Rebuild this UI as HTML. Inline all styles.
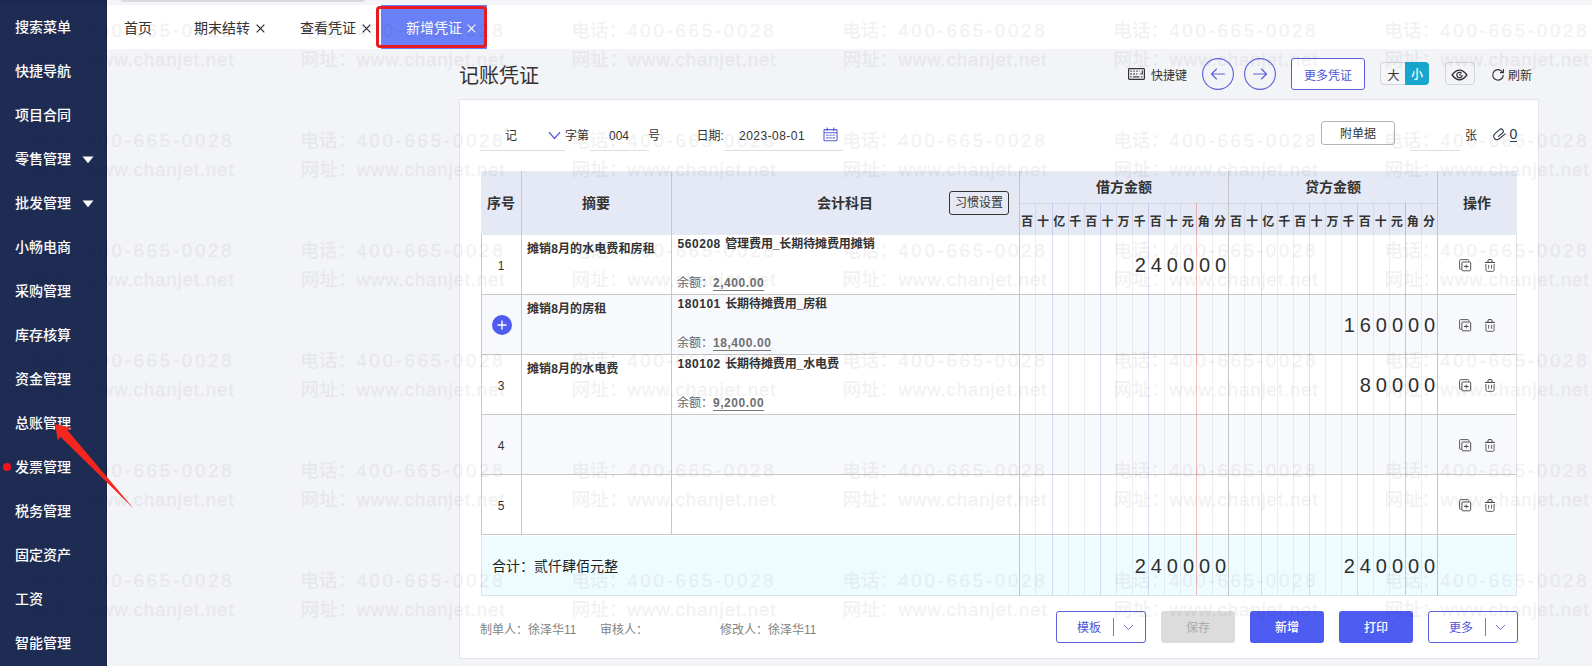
<!DOCTYPE html><html lang="zh-CN"><head><meta charset="utf-8"><title>记账凭证</title><style>

html,body{margin:0;padding:0}
body{width:1592px;height:666px;overflow:hidden;position:relative;background:#f3f4f7;font-family:"Liberation Sans","Noto Sans CJK SC",sans-serif;font-size:12px;color:#333;}
.abs{position:absolute}
.t{position:absolute;white-space:nowrap;line-height:1}
#side{position:absolute;left:0;top:0;width:107px;height:666px;background:#1e2c54}
#side .mi{position:absolute;left:15px;color:#fff;font-size:14px;font-weight:500;line-height:20px;white-space:nowrap}
#tabs{position:absolute;left:107px;top:0;width:1485px;height:49px;background:#fff}
.tab{position:absolute;top:18px;font-size:14px;line-height:20px;color:#333;white-space:nowrap}
#card{position:absolute;left:459px;top:99px;width:1080px;height:560px;background:#fff;border:1px solid #e3e4e8;box-sizing:border-box}
.hd{position:absolute;background:#e5e9f5}
.hl{position:absolute;background:#c9c9cc}
.vl{position:absolute;width:1px}
.b{font-weight:bold}
.btn{position:absolute;box-sizing:border-box;border-radius:3px;text-align:center;font-size:12px}
.num{position:absolute;font-size:20px;line-height:20px;letter-spacing:4.955px;color:#303030;white-space:nowrap;text-align:right}
.wm{position:absolute;left:0;top:0;width:1592px;height:666px;overflow:hidden;pointer-events:none;z-index:50;opacity:0.052}
.wm div{position:absolute;white-space:nowrap;font-size:18.67px;line-height:24px;color:#0c0c18;font-weight:500}
.wm span{-webkit-text-stroke:0.4px #0c0c18}

</style></head><body>
<div class="abs" style="left:107px;top:0;width:1px;height:666px;background:#fcfdff"></div>
<div id="side">
<div class="abs" style="left:0;top:0;width:107px;height:4px;background:#1a2750"></div>
<div class="abs" style="left:106px;top:0;width:1px;height:666px;background:#182247"></div>
<div class="mi" style="top:17px">搜索菜单</div>
<div class="mi" style="top:61px">快捷导航</div>
<div class="mi" style="top:105px">项目合同</div>
<div class="mi" style="top:149px">零售管理</div>
<svg class="abs" style="left:82px;top:156px" width="12" height="8" viewBox="0 0 12 8"><path d="M0.5 0.5h11l-5.5 6.8z" fill="#fff"/></svg>
<div class="mi" style="top:193px">批发管理</div>
<svg class="abs" style="left:82px;top:200px" width="12" height="8" viewBox="0 0 12 8"><path d="M0.5 0.5h11l-5.5 6.8z" fill="#fff"/></svg>
<div class="mi" style="top:237px">小畅电商</div>
<div class="mi" style="top:281px">采购管理</div>
<div class="mi" style="top:325px">库存核算</div>
<div class="mi" style="top:369px">资金管理</div>
<div class="mi" style="top:413px">总账管理</div>
<div class="mi" style="top:457px">发票管理</div>
<div class="mi" style="top:501px">税务管理</div>
<div class="mi" style="top:545px">固定资产</div>
<div class="mi" style="top:589px">工资</div>
<div class="mi" style="top:633px">智能管理</div>
<div class="abs" style="left:3px;top:463px;width:8px;height:8px;border-radius:50%;background:#f5121b"></div>
</div>
<div id="tabs">
<div class="abs" style="left:0;top:0;width:1485px;height:5px;background:#f3f4f7"></div>
<div class="abs" style="left:14px;top:0;width:244px;height:2px;background:#d9dadd;border-radius:0 0 2px 2px"></div>
</div>
<div class="tab" style="left:124px">首页</div>
<div class="tab" style="left:194px">期末结转</div>
<div class="tab" style="left:300px">查看凭证</div>
<svg class="abs" style="left:255.8px;top:24.0px" width="9" height="9" viewBox="0 0 9 9"><path d="M0.7 0.7L8.3 8.3M8.3 0.7L0.7 8.3" stroke="#222" stroke-width="1.1" fill="none"/></svg>
<svg class="abs" style="left:361.8px;top:24.0px" width="9" height="9" viewBox="0 0 9 9"><path d="M0.7 0.7L8.3 8.3M8.3 0.7L0.7 8.3" stroke="#222" stroke-width="1.1" fill="none"/></svg>
<div class="abs" style="left:381px;top:5px;width:106px;height:44px;background:#6a80f6"></div>
<div class="abs" style="left:379px;top:8px;width:2px;height:38px;background:#fff"></div>
<div class="abs" style="left:376px;top:6px;width:111px;height:42px;box-sizing:border-box;border:3px solid #e91b20;border-radius:4px;background:transparent"></div>
<div class="tab" style="left:406px;color:#fff">新增凭证</div>
<svg class="abs" style="left:467.3px;top:24.0px" width="9" height="9" viewBox="0 0 9 9"><path d="M0.7 0.7L8.3 8.3M8.3 0.7L0.7 8.3" stroke="#fff" stroke-width="1.1" fill="none"/></svg>
<div class="t" style="left:459px;top:65px;font-size:20px;line-height:22px;color:#333">记账凭证</div>
<svg class="abs" style="left:1128px;top:68px" width="17" height="12" viewBox="0 0 17 12"><rect x="0.6" y="0.6" width="15.8" height="10.8" rx="0.8" fill="none" stroke="#333" stroke-width="1.2"/><path d="M2.3 3.2h9.5M2.3 6h7" stroke="#444" stroke-width="1.3" stroke-dasharray="1.5 1.5" fill="none"/><path d="M2.3 8.8h1.5M5 8.8h6.5M13 8.8h1.5" stroke="#444" stroke-width="1.3" fill="none"/><path d="M14.3 2.5V6H11.8" stroke="#444" stroke-width="1.2" fill="none"/></svg>
<div class="t" style="left:1151px;top:69px;font-size:12px;line-height:14px">快捷键</div>
<svg class="abs" style="left:1202px;top:58px" width="32" height="32" viewBox="0 0 32 32"><circle cx="16" cy="16" r="15.4" fill="none" stroke="#5b60d8" stroke-width="1.1"/><g transform="translate(16 16) scale(-1 1)"><path d="M-6.5 0H6.5M1.5 -5L6.5 0L1.5 5" fill="none" stroke="#5b60d8" stroke-width="1.15" stroke-linecap="round" stroke-linejoin="round"/></g></svg>
<svg class="abs" style="left:1244px;top:58px" width="32" height="32" viewBox="0 0 32 32"><circle cx="16" cy="16" r="15.4" fill="none" stroke="#5b60d8" stroke-width="1.1"/><g transform="translate(16 16) scale(1 1)"><path d="M-6.5 0H6.5M1.5 -5L6.5 0L1.5 5" fill="none" stroke="#5b60d8" stroke-width="1.15" stroke-linecap="round" stroke-linejoin="round"/></g></svg>
<div class="btn" style="left:1291px;top:58px;width:74px;height:32px;border:1px solid #5b60d8;color:#4e55d6;background:#fff;line-height:32px;padding-top:1px">更多凭证</div>
<div class="abs" style="left:1380px;top:62px;width:26px;height:23px;box-sizing:border-box;border:1px solid #d4d6da;border-right:0;border-radius:4px 0 0 4px;background:#f5f6f8;text-align:center;line-height:24px;padding-top:1px;font-size:12px;color:#333">大</div>
<div class="abs" style="left:1405px;top:62px;width:24px;height:23px;border-radius:0 4px 4px 0;background:#17a7cd;text-align:center;line-height:25px;box-sizing:border-box;padding-top:1px;font-size:12px;font-weight:500;color:#fff">小</div>
<div class="abs" style="left:1445px;top:62px;width:30px;height:23px;box-sizing:border-box;border:1px solid #d4d6da;border-radius:4px;background:#f3f4f6"></div>
<svg class="abs" style="left:1451px;top:69px" width="17" height="12" viewBox="0 0 17 12"><path d="M1.1 6C4 2.2 6.5 1.2 8.5 1.2S13 2.2 15.9 6C13 9.8 10.5 10.8 8.5 10.8S4 9.8 1.1 6Z" fill="none" stroke="#2d2d33" stroke-width="1.3" stroke-linejoin="round"/><path d="M10.6 4.4A2.7 2.7 0 1 0 11.2 6" fill="none" stroke="#2d2d33" stroke-width="1.2"/><circle cx="9.1" cy="5.8" r="0.9" fill="#2d2d33"/></svg>
<svg class="abs" style="left:1491px;top:68px" width="14" height="14" viewBox="0 0 14 14"><path d="M11.6 4.2A5.3 5.3 0 1 0 12.3 7" fill="none" stroke="#333" stroke-width="1.2"/><path d="M12.4 1.2V4.6H9" fill="none" stroke="#333" stroke-width="1.2"/></svg>
<div class="t" style="left:1508px;top:69px;font-size:12px;line-height:14px">刷新</div>
<div id="card"></div>
<div class="abs" style="left:480px;top:150px;width:85px;height:1px;background:#dcdde1"></div>
<div class="abs" style="left:590px;top:150px;width:59px;height:1px;background:#dcdde1"></div>
<div class="abs" style="left:724px;top:150px;width:119px;height:1px;background:#dcdde1"></div>
<div class="abs" style="left:1410px;top:150px;width:50px;height:1px;background:#dcdde1"></div>
<div class="t" style="left:505px;top:129px;line-height:14px">记</div>
<svg class="abs" style="left:548px;top:131px" width="13" height="9" viewBox="0 0 13 9"><path d="M1 1.2L6.5 7.5L12 1.2" fill="none" stroke="#5b60d8" stroke-width="1.3"/></svg>
<div class="t" style="left:565px;top:129px;line-height:14px">字第</div>
<div class="t" style="left:609px;top:129px;line-height:14px">004</div>
<div class="t" style="left:648px;top:129px;line-height:14px">号</div>
<div class="t" style="left:696.6px;top:129px;line-height:14px">日期:</div>
<div class="t" style="left:739px;top:129px;line-height:14px;letter-spacing:0.47px">2023-08-01</div>
<svg class="abs" style="left:823px;top:127.4px" width="15" height="15" viewBox="0 0 15 15"><rect x="1" y="2.6" width="13" height="11.2" rx="0.8" fill="none" stroke="#5a62d8" stroke-width="1.1"/><path d="M4.2 0.6v3.4M10.8 0.6v3.4M1 5.8h13" stroke="#5a62d8" stroke-width="1.1"/><path d="M3.2 8.2h8.6M3.2 10.9h8.6" stroke="#5a62d8" stroke-width="1.1" stroke-dasharray="2.2 1"/></svg>
<div class="btn" style="left:1321px;top:121px;width:74px;height:24px;border:1px solid #b4b4b4;background:#fff;line-height:24px;color:#333">附单据</div>
<div class="t" style="left:1465px;top:129px;line-height:14px">张</div>
<svg class="abs" style="left:1492px;top:127px" width="14" height="14" viewBox="0 0 14 14"><g transform="translate(7 7.4) rotate(-40) scale(1.18) translate(-5.6 -3.5)"><path d="M4.2 4.5H8.6a1.9 1.9 0 0 0 0-3.8H3.4a2.9 2.9 0 0 0 0 5.8H9.8" fill="none" stroke="#2b3345" stroke-width="0.9" stroke-linecap="round"/></g></svg>
<div class="t" style="left:1509.5px;top:127px;font-size:14px;line-height:14px;color:#2b3a55;border-bottom:1px solid #2b3a55;padding-bottom:0px">0</div>
<div class="hd" style="left:481px;top:171px;width:1036px;height:64px"></div>
<div class="abs" style="left:481px;top:295px;width:1036px;height:59px;background:#f8f9fd"></div>
<div class="abs" style="left:481px;top:415px;width:1036px;height:59px;background:#f8f9fd"></div>
<div class="abs" style="left:481px;top:536px;width:1036px;height:60px;box-sizing:border-box;background:#effcff;border-left:1px solid #d9e3e8;border-bottom:1px solid #d9e3e8"></div>
<div class="hl" style="left:481px;top:294px;width:1036px;height:1px"></div>
<div class="hl" style="left:481px;top:354px;width:1036px;height:1px"></div>
<div class="hl" style="left:481px;top:414px;width:1036px;height:1px"></div>
<div class="hl" style="left:481px;top:474px;width:1036px;height:1px"></div>
<div class="hl" style="left:481px;top:534px;width:1036px;height:1px"></div>
<div class="hl" style="left:1020px;top:203px;width:417px;height:1px;background:#d5d8e2"></div>
<div class="vl" style="left:1035px;top:203px;height:392px;background:rgba(40,40,70,0.08)"></div>
<div class="vl" style="left:1052px;top:203px;height:392px;background:rgba(100,80,220,0.20)"></div>
<div class="vl" style="left:1068px;top:203px;height:392px;background:rgba(40,40,70,0.08)"></div>
<div class="vl" style="left:1084px;top:203px;height:392px;background:rgba(40,40,70,0.08)"></div>
<div class="vl" style="left:1100px;top:203px;height:392px;background:rgba(100,80,220,0.20)"></div>
<div class="vl" style="left:1116px;top:203px;height:392px;background:rgba(40,40,70,0.08)"></div>
<div class="vl" style="left:1132px;top:203px;height:392px;background:rgba(40,40,70,0.08)"></div>
<div class="vl" style="left:1148px;top:203px;height:392px;background:rgba(100,80,220,0.20)"></div>
<div class="vl" style="left:1164px;top:203px;height:392px;background:rgba(40,40,70,0.08)"></div>
<div class="vl" style="left:1180px;top:203px;height:392px;background:rgba(40,40,70,0.08)"></div>
<div class="vl" style="left:1196px;top:203px;height:392px;background:rgba(235,60,60,0.34)"></div>
<div class="vl" style="left:1212px;top:203px;height:392px;background:rgba(40,40,70,0.08)"></div>
<div class="vl" style="left:1244px;top:203px;height:392px;background:rgba(40,40,70,0.08)"></div>
<div class="vl" style="left:1261px;top:203px;height:392px;background:rgba(100,80,220,0.20)"></div>
<div class="vl" style="left:1277px;top:203px;height:392px;background:rgba(40,40,70,0.08)"></div>
<div class="vl" style="left:1293px;top:203px;height:392px;background:rgba(40,40,70,0.08)"></div>
<div class="vl" style="left:1309px;top:203px;height:392px;background:rgba(100,80,220,0.20)"></div>
<div class="vl" style="left:1325px;top:203px;height:392px;background:rgba(40,40,70,0.08)"></div>
<div class="vl" style="left:1341px;top:203px;height:392px;background:rgba(40,40,70,0.08)"></div>
<div class="vl" style="left:1357px;top:203px;height:392px;background:rgba(100,80,220,0.20)"></div>
<div class="vl" style="left:1373px;top:203px;height:392px;background:rgba(40,40,70,0.08)"></div>
<div class="vl" style="left:1389px;top:203px;height:392px;background:rgba(40,40,70,0.08)"></div>
<div class="vl" style="left:1405px;top:203px;height:392px;background:rgba(235,60,60,0.34)"></div>
<div class="vl" style="left:1421px;top:203px;height:392px;background:rgba(40,40,70,0.08)"></div>
<div class="vl" style="left:481px;top:235px;height:300px;background:#c9c9cc"></div>
<div class="vl" style="left:521px;top:171px;height:364px;background:#c9c9cc"></div>
<div class="vl" style="left:671px;top:171px;height:364px;background:#c9c9cc"></div>
<div class="vl" style="left:1019px;top:171px;height:425px;background:#c4c5c9"></div>
<div class="vl" style="left:1228px;top:171px;height:425px;background:#c4c5c9"></div>
<div class="vl" style="left:1437px;top:171px;height:425px;background:#c4c5c9"></div>
<div class="vl" style="left:1516px;top:235px;height:361px;background:#e3e4e8"></div>
<div class="t" style="left:501px;top:195px;width:200px;margin-left:-100px;text-align:center;font-size:14px;line-height:16px;font-weight:bold;color:#333;">序号</div>
<div class="t" style="left:596px;top:195px;width:200px;margin-left:-100px;text-align:center;font-size:14px;line-height:16px;font-weight:bold;color:#333;">摘要</div>
<div class="t" style="left:845px;top:195px;width:200px;margin-left:-100px;text-align:center;font-size:14px;line-height:16px;font-weight:bold;color:#333;">会计科目</div>
<div class="t" style="left:1124px;top:179px;width:200px;margin-left:-100px;text-align:center;font-size:14px;line-height:16px;font-weight:bold;color:#333;">借方金额</div>
<div class="t" style="left:1333px;top:179px;width:200px;margin-left:-100px;text-align:center;font-size:14px;line-height:16px;font-weight:bold;color:#333;">贷方金额</div>
<div class="t" style="left:1477px;top:195px;width:200px;margin-left:-100px;text-align:center;font-size:14px;line-height:16px;font-weight:bold;color:#333;">操作</div>
<div class="btn" style="left:949px;top:191px;width:60px;height:24px;border:1px solid #333;background:transparent;line-height:23px;color:#333;border-radius:3px">习惯设置</div>
<div class="t b" style="left:1019.04px;top:214.5px;width:16px;text-align:center;font-size:12px;line-height:14px">百</div>
<div class="t b" style="left:1035.12px;top:214.5px;width:16px;text-align:center;font-size:12px;line-height:14px">十</div>
<div class="t b" style="left:1051.19px;top:214.5px;width:16px;text-align:center;font-size:12px;line-height:14px">亿</div>
<div class="t b" style="left:1067.27px;top:214.5px;width:16px;text-align:center;font-size:12px;line-height:14px">千</div>
<div class="t b" style="left:1083.35px;top:214.5px;width:16px;text-align:center;font-size:12px;line-height:14px">百</div>
<div class="t b" style="left:1099.42px;top:214.5px;width:16px;text-align:center;font-size:12px;line-height:14px">十</div>
<div class="t b" style="left:1115.50px;top:214.5px;width:16px;text-align:center;font-size:12px;line-height:14px">万</div>
<div class="t b" style="left:1131.58px;top:214.5px;width:16px;text-align:center;font-size:12px;line-height:14px">千</div>
<div class="t b" style="left:1147.65px;top:214.5px;width:16px;text-align:center;font-size:12px;line-height:14px">百</div>
<div class="t b" style="left:1163.73px;top:214.5px;width:16px;text-align:center;font-size:12px;line-height:14px">十</div>
<div class="t b" style="left:1179.81px;top:214.5px;width:16px;text-align:center;font-size:12px;line-height:14px">元</div>
<div class="t b" style="left:1195.89px;top:214.5px;width:16px;text-align:center;font-size:12px;line-height:14px">角</div>
<div class="t b" style="left:1211.96px;top:214.5px;width:16px;text-align:center;font-size:12px;line-height:14px">分</div>
<div class="t b" style="left:1228.04px;top:214.5px;width:16px;text-align:center;font-size:12px;line-height:14px">百</div>
<div class="t b" style="left:1244.12px;top:214.5px;width:16px;text-align:center;font-size:12px;line-height:14px">十</div>
<div class="t b" style="left:1260.19px;top:214.5px;width:16px;text-align:center;font-size:12px;line-height:14px">亿</div>
<div class="t b" style="left:1276.27px;top:214.5px;width:16px;text-align:center;font-size:12px;line-height:14px">千</div>
<div class="t b" style="left:1292.35px;top:214.5px;width:16px;text-align:center;font-size:12px;line-height:14px">百</div>
<div class="t b" style="left:1308.42px;top:214.5px;width:16px;text-align:center;font-size:12px;line-height:14px">十</div>
<div class="t b" style="left:1324.50px;top:214.5px;width:16px;text-align:center;font-size:12px;line-height:14px">万</div>
<div class="t b" style="left:1340.58px;top:214.5px;width:16px;text-align:center;font-size:12px;line-height:14px">千</div>
<div class="t b" style="left:1356.66px;top:214.5px;width:16px;text-align:center;font-size:12px;line-height:14px">百</div>
<div class="t b" style="left:1372.73px;top:214.5px;width:16px;text-align:center;font-size:12px;line-height:14px">十</div>
<div class="t b" style="left:1388.81px;top:214.5px;width:16px;text-align:center;font-size:12px;line-height:14px">元</div>
<div class="t b" style="left:1404.89px;top:214.5px;width:16px;text-align:center;font-size:12px;line-height:14px">角</div>
<div class="t b" style="left:1420.96px;top:214.5px;width:16px;text-align:center;font-size:12px;line-height:14px">分</div>
<div class="t" style="left:501px;top:259px;width:200px;margin-left:-100px;text-align:center;font-size:12px;line-height:14px;color:#333;">1</div>
<svg class="abs" style="left:1459px;top:259px" width="13" height="13" viewBox="0 0 13 13"><path d="M2.6 10.3H1.6a1 1 0 0 1-1-1V1.6a1 1 0 0 1 1-1h7.2a1 1 0 0 1 1 1v1" fill="none" stroke="#555" stroke-width="0.95"/><rect x="2.9" y="3" width="8.8" height="8.8" rx="1" fill="none" stroke="#4a4a4a" stroke-width="0.95"/><path d="M5.1 7.4h4.4" stroke="#333" stroke-width="1.05"/><path d="M7.3 5.4v4" stroke="#666" stroke-width="0.9"/></svg>
<svg class="abs" style="left:1484px;top:259px" width="12" height="13" viewBox="0 0 12 13"><path d="M1 3.4h10M4 3V1.6a1 1 0 0 1 1-1h2a1 1 0 0 1 1 1V3" fill="none" stroke="#3a3a3a" stroke-width="1"/><path d="M1.9 5v5.9a1.5 1.5 0 0 0 1.5 1.5h5.2a1.5 1.5 0 0 0 1.5-1.5V5M4.6 5.9v3.8M7.6 5.9v3.8" fill="none" stroke="#5a5a5a" stroke-width="0.95"/></svg>
<svg class="abs" style="left:492px;top:315px" width="20" height="20" viewBox="0 0 20 20"><circle cx="10" cy="10" r="10" fill="#4e5cf2"/><path d="M5.5 10h9M10 5.5v9" stroke="#fff" stroke-width="1.4"/></svg>
<svg class="abs" style="left:1459px;top:319px" width="13" height="13" viewBox="0 0 13 13"><path d="M2.6 10.3H1.6a1 1 0 0 1-1-1V1.6a1 1 0 0 1 1-1h7.2a1 1 0 0 1 1 1v1" fill="none" stroke="#555" stroke-width="0.95"/><rect x="2.9" y="3" width="8.8" height="8.8" rx="1" fill="none" stroke="#4a4a4a" stroke-width="0.95"/><path d="M5.1 7.4h4.4" stroke="#333" stroke-width="1.05"/><path d="M7.3 5.4v4" stroke="#666" stroke-width="0.9"/></svg>
<svg class="abs" style="left:1484px;top:319px" width="12" height="13" viewBox="0 0 12 13"><path d="M1 3.4h10M4 3V1.6a1 1 0 0 1 1-1h2a1 1 0 0 1 1 1V3" fill="none" stroke="#3a3a3a" stroke-width="1"/><path d="M1.9 5v5.9a1.5 1.5 0 0 0 1.5 1.5h5.2a1.5 1.5 0 0 0 1.5-1.5V5M4.6 5.9v3.8M7.6 5.9v3.8" fill="none" stroke="#5a5a5a" stroke-width="0.95"/></svg>
<div class="t" style="left:501px;top:379px;width:200px;margin-left:-100px;text-align:center;font-size:12px;line-height:14px;color:#333;">3</div>
<svg class="abs" style="left:1459px;top:379px" width="13" height="13" viewBox="0 0 13 13"><path d="M2.6 10.3H1.6a1 1 0 0 1-1-1V1.6a1 1 0 0 1 1-1h7.2a1 1 0 0 1 1 1v1" fill="none" stroke="#555" stroke-width="0.95"/><rect x="2.9" y="3" width="8.8" height="8.8" rx="1" fill="none" stroke="#4a4a4a" stroke-width="0.95"/><path d="M5.1 7.4h4.4" stroke="#333" stroke-width="1.05"/><path d="M7.3 5.4v4" stroke="#666" stroke-width="0.9"/></svg>
<svg class="abs" style="left:1484px;top:379px" width="12" height="13" viewBox="0 0 12 13"><path d="M1 3.4h10M4 3V1.6a1 1 0 0 1 1-1h2a1 1 0 0 1 1 1V3" fill="none" stroke="#3a3a3a" stroke-width="1"/><path d="M1.9 5v5.9a1.5 1.5 0 0 0 1.5 1.5h5.2a1.5 1.5 0 0 0 1.5-1.5V5M4.6 5.9v3.8M7.6 5.9v3.8" fill="none" stroke="#5a5a5a" stroke-width="0.95"/></svg>
<div class="t" style="left:501px;top:439px;width:200px;margin-left:-100px;text-align:center;font-size:12px;line-height:14px;color:#333;">4</div>
<svg class="abs" style="left:1459px;top:439px" width="13" height="13" viewBox="0 0 13 13"><path d="M2.6 10.3H1.6a1 1 0 0 1-1-1V1.6a1 1 0 0 1 1-1h7.2a1 1 0 0 1 1 1v1" fill="none" stroke="#555" stroke-width="0.95"/><rect x="2.9" y="3" width="8.8" height="8.8" rx="1" fill="none" stroke="#4a4a4a" stroke-width="0.95"/><path d="M5.1 7.4h4.4" stroke="#333" stroke-width="1.05"/><path d="M7.3 5.4v4" stroke="#666" stroke-width="0.9"/></svg>
<svg class="abs" style="left:1484px;top:439px" width="12" height="13" viewBox="0 0 12 13"><path d="M1 3.4h10M4 3V1.6a1 1 0 0 1 1-1h2a1 1 0 0 1 1 1V3" fill="none" stroke="#3a3a3a" stroke-width="1"/><path d="M1.9 5v5.9a1.5 1.5 0 0 0 1.5 1.5h5.2a1.5 1.5 0 0 0 1.5-1.5V5M4.6 5.9v3.8M7.6 5.9v3.8" fill="none" stroke="#5a5a5a" stroke-width="0.95"/></svg>
<div class="t" style="left:501px;top:499px;width:200px;margin-left:-100px;text-align:center;font-size:12px;line-height:14px;color:#333;">5</div>
<svg class="abs" style="left:1459px;top:499px" width="13" height="13" viewBox="0 0 13 13"><path d="M2.6 10.3H1.6a1 1 0 0 1-1-1V1.6a1 1 0 0 1 1-1h7.2a1 1 0 0 1 1 1v1" fill="none" stroke="#555" stroke-width="0.95"/><rect x="2.9" y="3" width="8.8" height="8.8" rx="1" fill="none" stroke="#4a4a4a" stroke-width="0.95"/><path d="M5.1 7.4h4.4" stroke="#333" stroke-width="1.05"/><path d="M7.3 5.4v4" stroke="#666" stroke-width="0.9"/></svg>
<svg class="abs" style="left:1484px;top:499px" width="12" height="13" viewBox="0 0 12 13"><path d="M1 3.4h10M4 3V1.6a1 1 0 0 1 1-1h2a1 1 0 0 1 1 1V3" fill="none" stroke="#3a3a3a" stroke-width="1"/><path d="M1.9 5v5.9a1.5 1.5 0 0 0 1.5 1.5h5.2a1.5 1.5 0 0 0 1.5-1.5V5M4.6 5.9v3.8M7.6 5.9v3.8" fill="none" stroke="#5a5a5a" stroke-width="0.95"/></svg>
<div class="t b" style="left:527px;top:242px;line-height:14px;letter-spacing:0.1px">摊销8月的水电费和房租</div>
<div class="t b" style="left:677.5px;top:237px;line-height:14px"><span style="letter-spacing:0.55px">560208</span> <span style="margin-left:1px;letter-spacing:-0.1px">管理费用_长期待摊费用摊销</span></div>
<div class="t" style="left:677px;top:276px;line-height:14px;color:#666">余额：<span class="b" style="margin-left:0px;letter-spacing:0.55px;color:#707070;border-bottom:1px solid #777;padding-bottom:0px">2,400.00</span></div>
<div class="t b" style="left:527px;top:302px;line-height:14px;letter-spacing:0.1px">摊销8月的房租</div>
<div class="t b" style="left:677.5px;top:297px;line-height:14px"><span style="letter-spacing:0.55px">180101</span> <span style="margin-left:1px;letter-spacing:-0.1px">长期待摊费用_房租</span></div>
<div class="t" style="left:677px;top:336px;line-height:14px;color:#666">余额：<span class="b" style="margin-left:0px;letter-spacing:0.55px;color:#707070;border-bottom:1px solid #777;padding-bottom:0px">18,400.00</span></div>
<div class="t b" style="left:527px;top:362px;line-height:14px;letter-spacing:0.1px">摊销8月的水电费</div>
<div class="t b" style="left:677.5px;top:357px;line-height:14px"><span style="letter-spacing:0.55px">180102</span> <span style="margin-left:1px;letter-spacing:-0.1px">长期待摊费用_水电费</span></div>
<div class="t" style="left:677px;top:396px;line-height:14px;color:#666">余额：<span class="b" style="margin-left:0px;letter-spacing:0.55px;color:#707070;border-bottom:1px solid #777;padding-bottom:0px">9,200.00</span></div>
<div class="num" style="left:1031.2px;top:255px;width:200px">240000</div>
<div class="num" style="left:1240.2px;top:315px;width:200px">160000</div>
<div class="num" style="left:1240.2px;top:375px;width:200px">80000</div>
<div class="num" style="left:1031.2px;top:556px;width:200px">240000</div>
<div class="num" style="left:1240.2px;top:556px;width:200px">240000</div>
<div class="t" style="left:492px;top:558px;font-size:14px;line-height:16px;color:#222">合计：贰仟肆佰元整</div>
<div class="t" style="left:480px;top:623px;line-height:14px;color:#828282">制单人：徐泽华11</div>
<div class="t" style="left:600px;top:623px;line-height:14px;color:#828282">审核人：</div>
<div class="t" style="left:720px;top:623px;line-height:14px;color:#828282">修改人：徐泽华11</div>
<div class="btn" style="left:1056px;top:611px;width:90px;height:32px;border:1px solid #5b60d8;background:#fff"></div>
<div class="t" style="left:1077px;top:621px;line-height:14px;color:#4e55d6">模板</div>
<div class="abs" style="left:1113px;top:618px;width:1px;height:18px;background:#2ba3b8"></div>
<svg class="abs" style="left:1123px;top:624px" width="11" height="7" viewBox="0 0 11 7"><path d="M1 1L5.5 5.6L10 1" fill="none" stroke="#6a70dd" stroke-width="1"/></svg>
<div class="btn" style="left:1161px;top:611px;width:74px;height:32px;background:#dcdcdc;color:#aaa;line-height:34px">保存</div>
<div class="btn" style="font-weight:500;left:1250px;top:611px;width:74px;height:32px;background:#4e5cf2;color:#fff;line-height:34px">新增</div>
<div class="btn" style="font-weight:500;left:1339px;top:611px;width:74px;height:32px;background:#4e5cf2;color:#fff;line-height:34px">打印</div>
<div class="btn" style="left:1428px;top:611px;width:90px;height:32px;border:1px solid #5b60d8;background:#fff"></div>
<div class="t" style="left:1449px;top:621px;line-height:14px;color:#4e55d6">更多</div>
<div class="abs" style="left:1485px;top:618px;width:1px;height:18px;background:#2ba3b8"></div>
<svg class="abs" style="left:1495px;top:624px" width="11" height="7" viewBox="0 0 11 7"><path d="M1 1L5.5 5.6L10 1" fill="none" stroke="#6a70dd" stroke-width="1"/></svg>
<svg class="abs" style="left:0;top:0;z-index:40" width="1592" height="666" viewBox="0 0 1592 666"><path d="M55.2 424L70.6 427.8L67.6 430.4L133.8 508.8L60.4 436.8L57.8 440.6Z" fill="#f5261d"/></svg>
<div class="wm">
<div style="left:29.2px;top:-91px">电话：<span style="letter-spacing:2.75px">400-665-0028</span></div>
<div style="left:29.5px;top:-62px">网址：<span style="letter-spacing:0.87px">www.chanjet.net</span></div>
<div style="left:300.2px;top:-91px">电话：<span style="letter-spacing:2.75px">400-665-0028</span></div>
<div style="left:300.5px;top:-62px">网址：<span style="letter-spacing:0.87px">www.chanjet.net</span></div>
<div style="left:571.2px;top:-91px">电话：<span style="letter-spacing:2.75px">400-665-0028</span></div>
<div style="left:571.5px;top:-62px">网址：<span style="letter-spacing:0.87px">www.chanjet.net</span></div>
<div style="left:842.2px;top:-91px">电话：<span style="letter-spacing:2.75px">400-665-0028</span></div>
<div style="left:842.5px;top:-62px">网址：<span style="letter-spacing:0.87px">www.chanjet.net</span></div>
<div style="left:1113.2px;top:-91px">电话：<span style="letter-spacing:2.75px">400-665-0028</span></div>
<div style="left:1113.5px;top:-62px">网址：<span style="letter-spacing:0.87px">www.chanjet.net</span></div>
<div style="left:1384.2px;top:-91px">电话：<span style="letter-spacing:2.75px">400-665-0028</span></div>
<div style="left:1384.5px;top:-62px">网址：<span style="letter-spacing:0.87px">www.chanjet.net</span></div>
<div style="left:1655.2px;top:-91px">电话：<span style="letter-spacing:2.75px">400-665-0028</span></div>
<div style="left:1655.5px;top:-62px">网址：<span style="letter-spacing:0.87px">www.chanjet.net</span></div>
<div style="left:29.2px;top:19px">电话：<span style="letter-spacing:2.75px">400-665-0028</span></div>
<div style="left:29.5px;top:48px">网址：<span style="letter-spacing:0.87px">www.chanjet.net</span></div>
<div style="left:300.2px;top:19px">电话：<span style="letter-spacing:2.75px">400-665-0028</span></div>
<div style="left:300.5px;top:48px">网址：<span style="letter-spacing:0.87px">www.chanjet.net</span></div>
<div style="left:571.2px;top:19px">电话：<span style="letter-spacing:2.75px">400-665-0028</span></div>
<div style="left:571.5px;top:48px">网址：<span style="letter-spacing:0.87px">www.chanjet.net</span></div>
<div style="left:842.2px;top:19px">电话：<span style="letter-spacing:2.75px">400-665-0028</span></div>
<div style="left:842.5px;top:48px">网址：<span style="letter-spacing:0.87px">www.chanjet.net</span></div>
<div style="left:1113.2px;top:19px">电话：<span style="letter-spacing:2.75px">400-665-0028</span></div>
<div style="left:1113.5px;top:48px">网址：<span style="letter-spacing:0.87px">www.chanjet.net</span></div>
<div style="left:1384.2px;top:19px">电话：<span style="letter-spacing:2.75px">400-665-0028</span></div>
<div style="left:1384.5px;top:48px">网址：<span style="letter-spacing:0.87px">www.chanjet.net</span></div>
<div style="left:1655.2px;top:19px">电话：<span style="letter-spacing:2.75px">400-665-0028</span></div>
<div style="left:1655.5px;top:48px">网址：<span style="letter-spacing:0.87px">www.chanjet.net</span></div>
<div style="left:29.2px;top:129px">电话：<span style="letter-spacing:2.75px">400-665-0028</span></div>
<div style="left:29.5px;top:158px">网址：<span style="letter-spacing:0.87px">www.chanjet.net</span></div>
<div style="left:300.2px;top:129px">电话：<span style="letter-spacing:2.75px">400-665-0028</span></div>
<div style="left:300.5px;top:158px">网址：<span style="letter-spacing:0.87px">www.chanjet.net</span></div>
<div style="left:571.2px;top:129px">电话：<span style="letter-spacing:2.75px">400-665-0028</span></div>
<div style="left:571.5px;top:158px">网址：<span style="letter-spacing:0.87px">www.chanjet.net</span></div>
<div style="left:842.2px;top:129px">电话：<span style="letter-spacing:2.75px">400-665-0028</span></div>
<div style="left:842.5px;top:158px">网址：<span style="letter-spacing:0.87px">www.chanjet.net</span></div>
<div style="left:1113.2px;top:129px">电话：<span style="letter-spacing:2.75px">400-665-0028</span></div>
<div style="left:1113.5px;top:158px">网址：<span style="letter-spacing:0.87px">www.chanjet.net</span></div>
<div style="left:1384.2px;top:129px">电话：<span style="letter-spacing:2.75px">400-665-0028</span></div>
<div style="left:1384.5px;top:158px">网址：<span style="letter-spacing:0.87px">www.chanjet.net</span></div>
<div style="left:1655.2px;top:129px">电话：<span style="letter-spacing:2.75px">400-665-0028</span></div>
<div style="left:1655.5px;top:158px">网址：<span style="letter-spacing:0.87px">www.chanjet.net</span></div>
<div style="left:29.2px;top:239px">电话：<span style="letter-spacing:2.75px">400-665-0028</span></div>
<div style="left:29.5px;top:268px">网址：<span style="letter-spacing:0.87px">www.chanjet.net</span></div>
<div style="left:300.2px;top:239px">电话：<span style="letter-spacing:2.75px">400-665-0028</span></div>
<div style="left:300.5px;top:268px">网址：<span style="letter-spacing:0.87px">www.chanjet.net</span></div>
<div style="left:571.2px;top:239px">电话：<span style="letter-spacing:2.75px">400-665-0028</span></div>
<div style="left:571.5px;top:268px">网址：<span style="letter-spacing:0.87px">www.chanjet.net</span></div>
<div style="left:842.2px;top:239px">电话：<span style="letter-spacing:2.75px">400-665-0028</span></div>
<div style="left:842.5px;top:268px">网址：<span style="letter-spacing:0.87px">www.chanjet.net</span></div>
<div style="left:1113.2px;top:239px">电话：<span style="letter-spacing:2.75px">400-665-0028</span></div>
<div style="left:1113.5px;top:268px">网址：<span style="letter-spacing:0.87px">www.chanjet.net</span></div>
<div style="left:1384.2px;top:239px">电话：<span style="letter-spacing:2.75px">400-665-0028</span></div>
<div style="left:1384.5px;top:268px">网址：<span style="letter-spacing:0.87px">www.chanjet.net</span></div>
<div style="left:1655.2px;top:239px">电话：<span style="letter-spacing:2.75px">400-665-0028</span></div>
<div style="left:1655.5px;top:268px">网址：<span style="letter-spacing:0.87px">www.chanjet.net</span></div>
<div style="left:29.2px;top:349px">电话：<span style="letter-spacing:2.75px">400-665-0028</span></div>
<div style="left:29.5px;top:378px">网址：<span style="letter-spacing:0.87px">www.chanjet.net</span></div>
<div style="left:300.2px;top:349px">电话：<span style="letter-spacing:2.75px">400-665-0028</span></div>
<div style="left:300.5px;top:378px">网址：<span style="letter-spacing:0.87px">www.chanjet.net</span></div>
<div style="left:571.2px;top:349px">电话：<span style="letter-spacing:2.75px">400-665-0028</span></div>
<div style="left:571.5px;top:378px">网址：<span style="letter-spacing:0.87px">www.chanjet.net</span></div>
<div style="left:842.2px;top:349px">电话：<span style="letter-spacing:2.75px">400-665-0028</span></div>
<div style="left:842.5px;top:378px">网址：<span style="letter-spacing:0.87px">www.chanjet.net</span></div>
<div style="left:1113.2px;top:349px">电话：<span style="letter-spacing:2.75px">400-665-0028</span></div>
<div style="left:1113.5px;top:378px">网址：<span style="letter-spacing:0.87px">www.chanjet.net</span></div>
<div style="left:1384.2px;top:349px">电话：<span style="letter-spacing:2.75px">400-665-0028</span></div>
<div style="left:1384.5px;top:378px">网址：<span style="letter-spacing:0.87px">www.chanjet.net</span></div>
<div style="left:1655.2px;top:349px">电话：<span style="letter-spacing:2.75px">400-665-0028</span></div>
<div style="left:1655.5px;top:378px">网址：<span style="letter-spacing:0.87px">www.chanjet.net</span></div>
<div style="left:29.2px;top:459px">电话：<span style="letter-spacing:2.75px">400-665-0028</span></div>
<div style="left:29.5px;top:488px">网址：<span style="letter-spacing:0.87px">www.chanjet.net</span></div>
<div style="left:300.2px;top:459px">电话：<span style="letter-spacing:2.75px">400-665-0028</span></div>
<div style="left:300.5px;top:488px">网址：<span style="letter-spacing:0.87px">www.chanjet.net</span></div>
<div style="left:571.2px;top:459px">电话：<span style="letter-spacing:2.75px">400-665-0028</span></div>
<div style="left:571.5px;top:488px">网址：<span style="letter-spacing:0.87px">www.chanjet.net</span></div>
<div style="left:842.2px;top:459px">电话：<span style="letter-spacing:2.75px">400-665-0028</span></div>
<div style="left:842.5px;top:488px">网址：<span style="letter-spacing:0.87px">www.chanjet.net</span></div>
<div style="left:1113.2px;top:459px">电话：<span style="letter-spacing:2.75px">400-665-0028</span></div>
<div style="left:1113.5px;top:488px">网址：<span style="letter-spacing:0.87px">www.chanjet.net</span></div>
<div style="left:1384.2px;top:459px">电话：<span style="letter-spacing:2.75px">400-665-0028</span></div>
<div style="left:1384.5px;top:488px">网址：<span style="letter-spacing:0.87px">www.chanjet.net</span></div>
<div style="left:1655.2px;top:459px">电话：<span style="letter-spacing:2.75px">400-665-0028</span></div>
<div style="left:1655.5px;top:488px">网址：<span style="letter-spacing:0.87px">www.chanjet.net</span></div>
<div style="left:29.2px;top:569px">电话：<span style="letter-spacing:2.75px">400-665-0028</span></div>
<div style="left:29.5px;top:598px">网址：<span style="letter-spacing:0.87px">www.chanjet.net</span></div>
<div style="left:300.2px;top:569px">电话：<span style="letter-spacing:2.75px">400-665-0028</span></div>
<div style="left:300.5px;top:598px">网址：<span style="letter-spacing:0.87px">www.chanjet.net</span></div>
<div style="left:571.2px;top:569px">电话：<span style="letter-spacing:2.75px">400-665-0028</span></div>
<div style="left:571.5px;top:598px">网址：<span style="letter-spacing:0.87px">www.chanjet.net</span></div>
<div style="left:842.2px;top:569px">电话：<span style="letter-spacing:2.75px">400-665-0028</span></div>
<div style="left:842.5px;top:598px">网址：<span style="letter-spacing:0.87px">www.chanjet.net</span></div>
<div style="left:1113.2px;top:569px">电话：<span style="letter-spacing:2.75px">400-665-0028</span></div>
<div style="left:1113.5px;top:598px">网址：<span style="letter-spacing:0.87px">www.chanjet.net</span></div>
<div style="left:1384.2px;top:569px">电话：<span style="letter-spacing:2.75px">400-665-0028</span></div>
<div style="left:1384.5px;top:598px">网址：<span style="letter-spacing:0.87px">www.chanjet.net</span></div>
<div style="left:1655.2px;top:569px">电话：<span style="letter-spacing:2.75px">400-665-0028</span></div>
<div style="left:1655.5px;top:598px">网址：<span style="letter-spacing:0.87px">www.chanjet.net</span></div>
<div style="left:29.2px;top:679px">电话：<span style="letter-spacing:2.75px">400-665-0028</span></div>
<div style="left:29.5px;top:708px">网址：<span style="letter-spacing:0.87px">www.chanjet.net</span></div>
<div style="left:300.2px;top:679px">电话：<span style="letter-spacing:2.75px">400-665-0028</span></div>
<div style="left:300.5px;top:708px">网址：<span style="letter-spacing:0.87px">www.chanjet.net</span></div>
<div style="left:571.2px;top:679px">电话：<span style="letter-spacing:2.75px">400-665-0028</span></div>
<div style="left:571.5px;top:708px">网址：<span style="letter-spacing:0.87px">www.chanjet.net</span></div>
<div style="left:842.2px;top:679px">电话：<span style="letter-spacing:2.75px">400-665-0028</span></div>
<div style="left:842.5px;top:708px">网址：<span style="letter-spacing:0.87px">www.chanjet.net</span></div>
<div style="left:1113.2px;top:679px">电话：<span style="letter-spacing:2.75px">400-665-0028</span></div>
<div style="left:1113.5px;top:708px">网址：<span style="letter-spacing:0.87px">www.chanjet.net</span></div>
<div style="left:1384.2px;top:679px">电话：<span style="letter-spacing:2.75px">400-665-0028</span></div>
<div style="left:1384.5px;top:708px">网址：<span style="letter-spacing:0.87px">www.chanjet.net</span></div>
<div style="left:1655.2px;top:679px">电话：<span style="letter-spacing:2.75px">400-665-0028</span></div>
<div style="left:1655.5px;top:708px">网址：<span style="letter-spacing:0.87px">www.chanjet.net</span></div>
</div>
</body></html>
